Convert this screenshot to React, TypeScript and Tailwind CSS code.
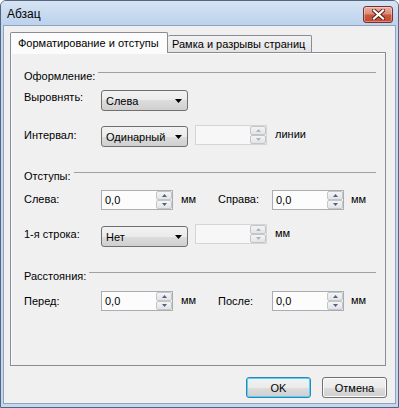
import React from "react";

const Up = ({ c, w = 7, h = 4 }: { c: string; w?: number; h?: number }) => (
  <svg width={w} height={h} viewBox={`0 0 ${w} ${h}`}><path d={`M0 ${h} L${w / 2} 0 L${w} ${h} Z`} fill={c} /></svg>
);
const Down = ({ c, w = 7, h = 4 }: { c: string; w?: number; h?: number }) => (
  <svg width={w} height={h} viewBox={`0 0 ${w} ${h}`}><path d={`M0 0 L${w / 2} ${h} L${w} 0 Z`} fill={c} /></svg>
);

function Spin({ value, disabled, className = "" }: { value?: string; disabled?: boolean; className?: string }) {
  const arrow = disabled ? "#a9b3c6" : "#4f6289";
  return (
    <div
      className={`flex h-[20px] w-[72px] shrink-0 border ${
        disabled ? "border-[#d5d5d5] bg-[#f7f7f7]" : "border-[#abadb3] bg-[#fcfcfc]"
      } ${className}`}
    >
      <div className="flex flex-1 items-center pl-[3px] leading-[14px] text-black">{value}</div>
      <div className="flex w-[16px] flex-col">
        <div className="flex h-[9px] items-center justify-center rounded-[2px] border border-[#c2c5ca] bg-gradient-to-b from-[#f4f4f4] to-[#e4e4e4]">
          <Up c={arrow} w={5} h={3} />
        </div>
        <div className="flex h-[9px] items-center justify-center rounded-[2px] border border-[#c2c5ca] bg-gradient-to-b from-[#f4f4f4] to-[#e4e4e4]">
          <Down c={arrow} w={5} h={3} />
        </div>
      </div>
    </div>
  );
}

function Combo({ value, className = "" }: { value: string; className?: string }) {
  return (
    <div
      className={`flex h-[21px] w-[87px] shrink-0 items-center justify-between rounded-[3px] border border-[#707070] bg-[linear-gradient(to_bottom,#f2f2f2_0%,#ebebeb_50%,#dddddd_50%,#cfcfcf_100%)] pl-[4px] pr-[5px] ${className}`}
    >
      <span className="leading-[14px] text-black">{value}</span>
      <Down c="#000" />
    </div>
  );
}

function Header({ text, className = "" }: { text: string; className?: string }) {
  return (
    <div className={`flex h-[14px] items-start pr-[9px] ${className}`}>
      <span className="leading-[14px] text-black">{text}</span>
      <div className="ml-[3px] mt-[3px] h-px flex-1 bg-[#a0a0a0]" />
    </div>
  );
}

function Label({ text, className = "" }: { text: string; className?: string }) {
  return <div className={`w-[77px] shrink-0 leading-[14px] text-black ${className}`}>{text}</div>;
}

function Btn({ text, def }: { text: string; def?: boolean }) {
  return (
    <div
      className={`flex h-[21px] w-[65px] items-center justify-center rounded-[3px] border ${
        def ? "border-[#3c7fb1] shadow-[inset_0_0_0_1px_#48d8fb]" : "border-[#707070] shadow-[inset_0_0_0_1px_#fbfbfb]"
      } bg-[linear-gradient(to_bottom,#f2f2f2_0%,#ebebeb_50%,#dddddd_50%,#cfcfcf_100%)] leading-[14px] text-black`}
    >
      {text}
    </div>
  );
}

export default function App() {
  return (
    <div className="h-[408px] w-[399px] bg-white font-['Liberation_Sans',Arial,sans-serif] text-[11px]">
      <div className="flex h-[408px] w-[399px] flex-col overflow-hidden rounded-t-[6px] border border-[#52677f] bg-[#c4d7ee]">
        {/* title bar */}
        <div className="flex h-[24px] shrink-0 items-center justify-between bg-gradient-to-b from-[#d6e4f4] to-[#bcd2ec] pl-[6px] pr-[5px]">
          <span className="pt-[2px] text-[12px] leading-[16px] text-black">Абзац</span>
          <div className="mt-[2px] flex h-[17px] w-[30px] items-center justify-center rounded-[3px] border border-[#7a3030] bg-[linear-gradient(to_bottom,#eab0a2_0%,#dc8c78_45%,#c9573f_55%,#c44a31_100%)] shadow-[inset_0_0_0_1px_rgba(255,255,255,0.35)]">
            <svg width="13" height="11" viewBox="0 0 13 11">
              <path d="M2 1.5 L11 9.5 M11 1.5 L2 9.5" stroke="#5a1c14" strokeWidth="4" strokeLinecap="square" />
              <path d="M2 1.5 L11 9.5 M11 1.5 L2 9.5" stroke="#ffffff" strokeWidth="2.2" strokeLinecap="square" />
            </svg>
          </div>
        </div>
        {/* body */}
        <div className="flex flex-1 flex-col px-[2px] pb-[3px]">
          <div className="flex flex-1 flex-col border border-[#8ea3bd] bg-[#f0f0f0] pl-[6px] pr-[8px]">
            {/* tabs */}
            <div className="mt-[6px] flex h-[20px] items-end">
              <div className="relative z-10 mb-[-1px] flex h-[21px] w-[158px] items-start rounded-t-[2px] border-x border-t border-[#898c95] bg-[#fcfcfc] pl-[7px] pt-[3px] leading-[14px] text-black">
                Форматирование и отступы
              </div>
              <div className="flex h-[17px] w-[144px] items-start rounded-t-[2px] border-r border-t border-[#898c95] bg-gradient-to-b from-[#f3f3f3] to-[#e3e3e3] pl-[4px] pt-[1px] leading-[14px] text-black">
                Рамка и разрывы страниц
              </div>
            </div>
            {/* panel */}
            <div className="flex h-[314px] w-[376px] flex-col border border-[#898c95] bg-[#f0f0f0] pl-[13px] shadow-[inset_1px_1px_0_#fcfcfc]">
              <Header text="Оформление:" className="mt-[16px]" />
              <div className="mt-[7px] flex items-start">
                <Label text="Выровнять:" />
                <Combo value="Слева" />
              </div>
              <div className="mt-[14px] flex items-start">
                <Label text="Интервал:" className="mt-[3px]" />
                <Combo value="Одинарный" className="mt-[1px]" />
                <Spin disabled className="ml-[7px]" />
                <span className="ml-[8px] mt-[2px] leading-[14px]">линии</span>
              </div>
              <Header text="Отступы:" className="mt-[22px]" />
              <div className="mt-[7px] flex items-start">
                <Label text="Слева:" className="mt-[2px]" />
                <Spin value="0,0" />
                <span className="ml-[8px] mt-[2px] w-[37px] leading-[14px]">мм</span>
                <span className="mt-[2px] w-[54px] leading-[14px]">Справа:</span>
                <Spin value="0,0" />
                <span className="ml-[7px] mt-[2px] leading-[14px]">мм</span>
              </div>
              <div className="mt-[14px] flex items-start">
                <Label text="1-я строка:" className="mt-[3px]" />
                <Combo value="Нет" className="mt-[2px]" />
                <Spin disabled className="ml-[7px]" />
                <span className="ml-[8px] mt-[2px] leading-[14px]">мм</span>
              </div>
              <Header text="Расстояния:" className="mt-[22px]" />
              <div className="mt-[8px] flex items-start">
                <Label text="Перед:" className="mt-[3px]" />
                <Spin value="0,0" />
                <span className="ml-[8px] mt-[2px] w-[37px] leading-[14px]">мм</span>
                <span className="mt-[3px] w-[54px] leading-[14px]">После:</span>
                <Spin value="0,0" />
                <span className="ml-[7px] mt-[2px] leading-[14px]">мм</span>
              </div>
            </div>
            {/* buttons */}
            <div className="mt-[11px] flex justify-end gap-[11px]">
              <Btn text="OK" def />
              <Btn text="Отмена" />
            </div>
          </div>
        </div>
      </div>
    </div>
  );
}
